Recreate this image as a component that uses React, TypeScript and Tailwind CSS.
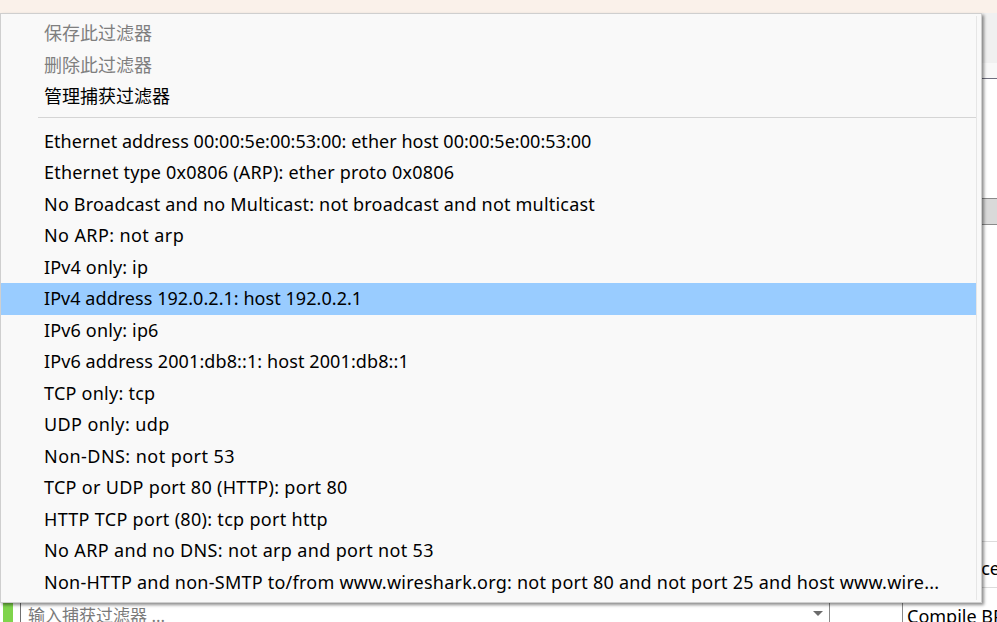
import React from "react";

type Item = { t: string; k: string };

const items: Item[] = [
  { t: "Ethernet address 00:00:5e:00:53:00: ether host 00:00:5e:00:53:00", k: "tracking-[0.03px]" },
  { t: "Ethernet type 0x0806 (ARP): ether proto 0x0806", k: "tracking-[0.2px]" },
  { t: "No Broadcast and no Multicast: not broadcast and not multicast", k: "tracking-[0.2px]" },
  { t: "No ARP: not arp", k: "tracking-[0.4px]" },
  { t: "IPv4 only: ip", k: "tracking-[0.15px]" },
  { t: "IPv4 address 192.0.2.1: host 192.0.2.1", k: "tracking-[0.05px]" },
  { t: "IPv6 only: ip6", k: "tracking-[0.15px]" },
  { t: "IPv6 address 2001:db8::1: host 2001:db8::1", k: "tracking-[0.1px]" },
  { t: "TCP only: tcp", k: "tracking-[0.25px]" },
  { t: "UDP only: udp", k: "tracking-[0.4px]" },
  { t: "Non-DNS: not port 53", k: "tracking-[0.45px]" },
  { t: "TCP or UDP port 80 (HTTP): port 80", k: "tracking-[0.3px]" },
  { t: "HTTP TCP port (80): tcp port http", k: "tracking-[0.3px]" },
  { t: "No ARP and no DNS: not arp and port not 53", k: "tracking-[0.35px]" },
  {
    t: "Non-HTTP and non-SMTP to/from www.wireshark.org: not port 80 and not port 25 and host www.wire...",
    k: "tracking-[0.24px]",
  },
];

const FONT = "'Noto Sans', 'Noto Sans CJK SC', sans-serif";

export default function App() {
  return (
    <div className="relative w-[997px] h-[622px] overflow-hidden bg-white" style={{ fontFamily: FONT }}>
      {/* underlying window */}
      <div className="flex flex-col h-full">
        <div className="h-[13px] shrink-0 bg-[#faf1ea]" />
        <div className="h-[50px] shrink-0 bg-[#f0f0f0]" />
        <div className="h-[15px] shrink-0 bg-[#f8f8f8]" />
        <div className="h-px shrink-0 bg-[#6f6f7f]" />
        <div className="h-[119px] shrink-0 bg-white" />
        <div className="h-[27px] shrink-0 bg-[#d9d9d9] border-y border-[#8a8a8a]" />
        <div className="h-[316px] shrink-0 bg-white" />
        <div className="h-[47px] shrink-0 border-y border-[#dcdcdc] bg-white flex items-center justify-end text-[18px] text-black overflow-hidden">
          <span className="translate-x-[3px] translate-y-[4px] whitespace-nowrap">Device</span>
        </div>
        <div className="flex-1 flex items-start bg-white">
          <div className="w-[3px] shrink-0" />
          <div className="w-[10px] shrink-0 h-full bg-[#7fd44c]" />
          <div className="w-[7px] shrink-0" />
          <div className="w-[809px] shrink-0 h-full border-l border-[#707070] flex items-start justify-between">
            <span className="pl-[7px] pt-[17px] text-[17px] leading-[22px] text-[#7a7a7a] whitespace-nowrap">
              输入捕获过滤器 ...
            </span>
            <svg width="10" height="6" viewBox="0 0 10 6" className="mt-[23px] mr-[6px]">
              <path d="M0 0 L10 0 L5 5 Z" fill="#6b6b6b" />
            </svg>
          </div>
          <div className="w-[73px] shrink-0 h-full border-l border-[#8a8a8a]" />
          <div className="flex-1 min-w-0 overflow-hidden h-full border-l border-[#8a8a8a] pl-[4px] pt-[17px] text-[18px] leading-[22px] text-black whitespace-nowrap">
            Compile BPF
          </div>
        </div>
      </div>

      {/* popup menu */}
      <div className="absolute left-0 top-[13px] w-[982px] h-[590px] bg-[#f9f9f9] border border-[#cfcfcf] shadow-[2px_2px_3px_rgba(0,0,0,0.45)]">
        <div className="flex h-full">
          <div className="w-[975px] pt-[4px] flex flex-col">
            <div className="h-[31.5px] flex items-center pl-[43px] text-[18px] text-[#7f7f7f]">保存此过滤器</div>
            <div className="h-[31.5px] flex items-center pl-[43px] text-[18px] text-[#7f7f7f]">删除此过滤器</div>
            <div className="h-[31.5px] flex items-center pl-[43px] text-[18px] text-black">管理捕获过滤器</div>
            <div className="h-[13px] flex flex-col pl-[37px]">
              <div className="mt-[4px] h-px bg-[#d5d5d5]" />
            </div>
            {items.map((it, i) => (
              <div
                key={i}
                className={
                  i === 5
                    ? "h-[31.5px] flex items-center pl-[43px] text-[18px] text-black bg-[#99ccff] whitespace-nowrap"
                    : "h-[31.5px] flex items-center pl-[43px] text-[18px] text-black whitespace-nowrap"
                }
              >
                <span className={it.k}>{it.t}</span>
              </div>
            ))}
          </div>
          <div className="w-px bg-[#e6e6e6] my-[2px]" />
        </div>
      </div>
    </div>
  );
}
